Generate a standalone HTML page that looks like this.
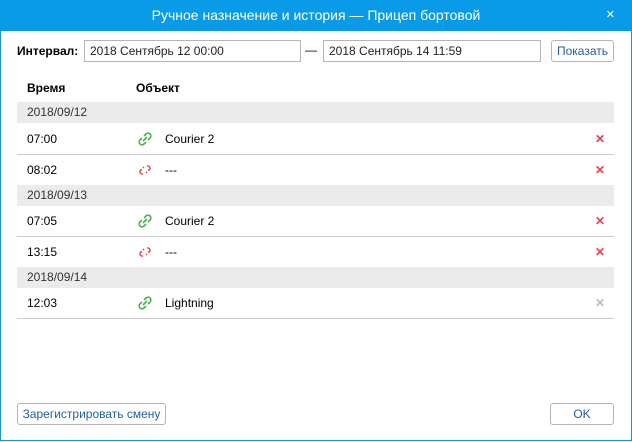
<html><head><style>
body{margin:0;width:632px;height:442px;overflow:hidden;font-family:"Liberation Sans",sans-serif;font-size:12px;color:#000;background:#fff}
.d{position:absolute;left:0;top:0;width:630px;height:440px;border:1px solid #0a9be8;border-top:none}
.t{position:absolute;left:0;top:0;width:632px;height:31px;background:#0a9be8;color:#fff;font-size:14px;text-align:center;line-height:31px}
.x{position:absolute;right:17px;top:0;font-size:11px}
.a{position:absolute}
.in{position:absolute;border:1px solid #b5b5b5;line-height:20px;padding-left:5px;font-size:12px;box-sizing:border-box;height:22px;color:#222}
.b{position:absolute;border:1px solid #b5b5b5;border-radius:3px;color:#1f5f9f;text-align:center;line-height:20px;height:22px;box-sizing:border-box;background:#fff}
.g{position:absolute;left:17px;width:597px;height:21px;background:#ebebeb;line-height:21px;padding-left:10px;box-sizing:border-box;color:#333}
.r{position:absolute;left:17px;width:597px;height:31px;border-bottom:1px solid #ccc;box-sizing:border-box;line-height:30px}
.r span{position:absolute}
.r svg{position:absolute;left:121px;top:8px}
.del{right:9px;color:#e8434b;font-size:12px;font-weight:bold}
</style></head><body>
<div class="d"></div>
<div class="t">Ручное назначение и история — Прицеп бортовой<span class="x">✕</span></div>
<div class="a" style="left:17px;top:44px;font-weight:bold">Интервал:</div>
<div class="in" style="left:84px;top:40px;width:217px">2018 Сентябрь 12 00:00</div>
<div class="a" style="left:305px;top:43px">—</div>
<div class="in" style="left:323px;top:40px;width:218px">2018 Сентябрь 14 11:59</div>
<div class="b" style="left:551px;top:40px;width:63px">Показать</div>
<div class="a" style="left:27px;top:81px;font-weight:bold">Время</div>
<div class="a" style="left:136px;top:81px;font-weight:bold">Объект</div>
<div class="g" style="top:102px">2018/09/12</div>
<div class="r" style="top:124px"><span style="left:10px">07:00</span><svg width="14" height="14" viewBox="0 0 14 14" fill="none" stroke="#4caf50" stroke-width="1.6"><path d="M6 4l2-2a2.5 2.5 0 014 4l-2 2M8 10l-2 2a2.5 2.5 0 01-4-4l2-2M5 9l4-4"/></svg><span style="left:148px">Courier 2</span><span class="del">✕</span></div>
<div class="r" style="top:155px"><span style="left:10px">08:02</span><svg width="14" height="14" viewBox="0 0 14 14" fill="none" stroke="#e8434b" stroke-width="1.4"><path d="M9 3a2.5 2.5 0 013 3l-1.5 1.5M5 11a2.5 2.5 0 01-3-3l1.5-1.5M6 5l-1-1M8 9l1 1M4 7H2M10 7h2"/></svg><span style="left:148px">---</span><span class="del">✕</span></div>
<div class="g" style="top:185px">2018/09/13</div>
<div class="r" style="top:206px"><span style="left:10px">07:05</span><svg width="14" height="14" viewBox="0 0 14 14" fill="none" stroke="#4caf50" stroke-width="1.6"><path d="M6 4l2-2a2.5 2.5 0 014 4l-2 2M8 10l-2 2a2.5 2.5 0 01-4-4l2-2M5 9l4-4"/></svg><span style="left:148px">Courier 2</span><span class="del">✕</span></div>
<div class="r" style="top:237px"><span style="left:10px">13:15</span><svg width="14" height="14" viewBox="0 0 14 14" fill="none" stroke="#e8434b" stroke-width="1.4"><path d="M9 3a2.5 2.5 0 013 3l-1.5 1.5M5 11a2.5 2.5 0 01-3-3l1.5-1.5M6 5l-1-1M8 9l1 1M4 7H2M10 7h2"/></svg><span style="left:148px">---</span><span class="del">✕</span></div>
<div class="g" style="top:267px">2018/09/14</div>
<div class="r" style="top:288px"><span style="left:10px">12:03</span><svg width="14" height="14" viewBox="0 0 14 14" fill="none" stroke="#4caf50" stroke-width="1.6"><path d="M6 4l2-2a2.5 2.5 0 014 4l-2 2M8 10l-2 2a2.5 2.5 0 01-4-4l2-2M5 9l4-4"/></svg><span style="left:148px">Lightning</span><span class="del" style="color:#bbb">✕</span></div>
<div class="b" style="left:17px;top:403px;width:149px">Зарегистрировать смену</div>
<div class="b" style="left:550px;top:403px;width:64px">OK</div>
</body></html>
